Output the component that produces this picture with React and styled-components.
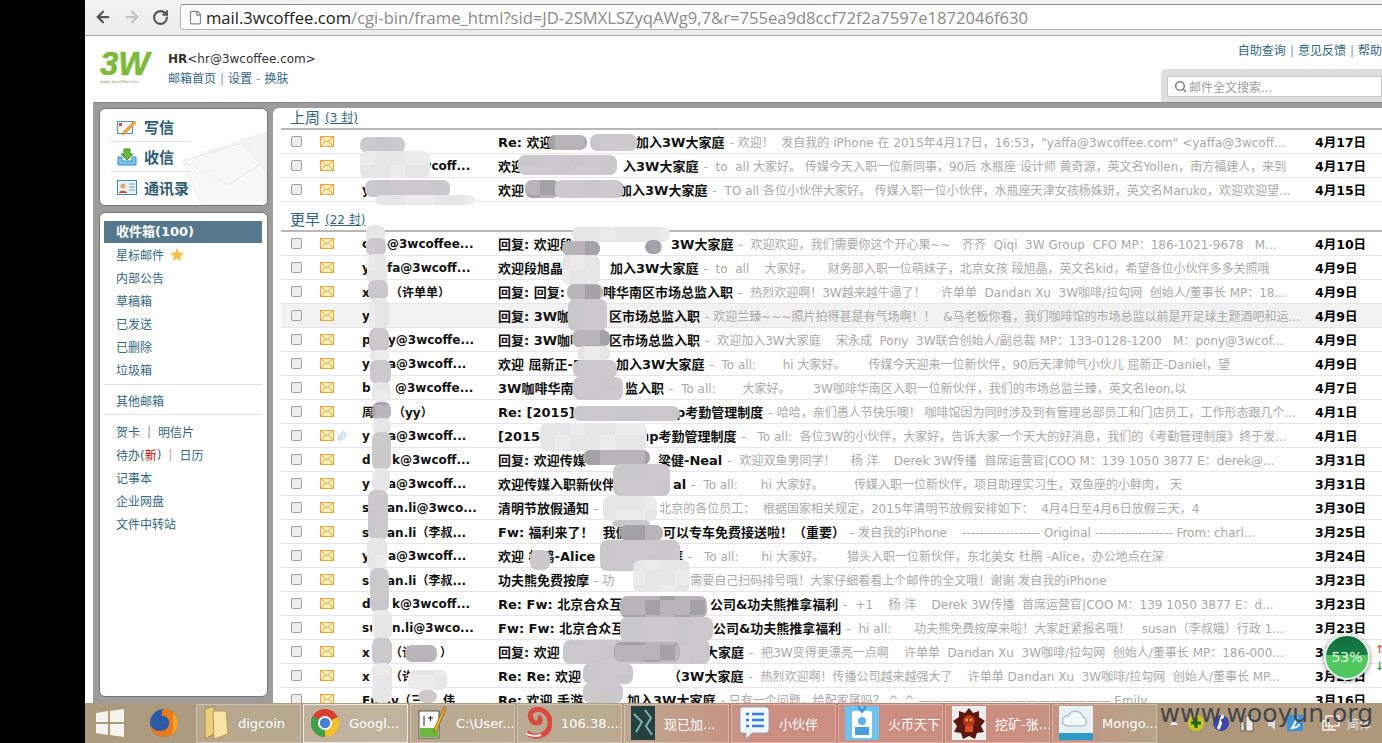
import React from 'react';
import styled, { createGlobalStyle } from 'styled-components';
import { ArrowLeft, ArrowRight, RotateCw, File, Search, Paperclip } from 'lucide-react';

const GlobalStyle = createGlobalStyle`
    html, body { margin: 0; padding: 0; background: #000; }
    * { box-sizing: border-box; }
`;

const FONT = `"DejaVu Sans", "Noto Sans CJK SC", sans-serif`;

// a number after a text is where the next text starts, the stretch between is hidden under the mosaic
const weekMails = [
    { sender: ['', 50], subject: ['Re: 欢迎', 138, '加入3W大家庭'], preview: ['欢迎！  发自我的 iPhone 在 2015年4月17日，16:53，"yaffa@3wcoffee.com" <yaffa@3wcoff...'], date: '4月17日' },
    { sender: ['', 50, '3wcoff...'], subject: ['欢迎', 125, '入3W大家庭'], preview: [' to  all 大家好。 传媒今天入职一位新同事，90后 水瓶座 设计师 黄奇源，英文名Yollen，南方福建人，来到'], date: '4月17日' },
    { sender: ['y'], subject: ['欢迎', 121, '加入3W大家庭'], preview: [' TO all 各位小伙伴大家好。 传媒入职一位小伙伴，水瓶座天津女孩杨姝妍，英文名Maruko，欢迎欢迎望...'], date: '4月15日' },
];

const olderMails = [
    { sender: ['c', 25, '@3wcoffee...'], subject: ['回复: 欢迎段', 173, '3W大家庭'], preview: [' 欢迎欢迎，我们需要你这个开心果~~   齐齐  Qiqi  3W Group  CFO MP：186-1021-9678   M...'], date: '4月10日' },
    { sender: ['y', 25, 'fa@3wcoff...'], subject: ['欢迎段旭晶', 112, '加入3W大家庭'], preview: [' to  all    大家好。    财务部入职一位萌妹子，北京女孩 段旭晶，英文名kid，希望各位小伙伴多多关照哦'], date: '4月9日' },
    { sender: ['x', 28, '（许单单）'], subject: ['回复: 回复:', 105, '啡华南区市场总监入职'], preview: [' 热烈欢迎啊！3W越来越牛逼了！    许单单  Dandan Xu  3W咖啡/拉勾网  创始人/董事长 MP：18...'], date: '4月9日' },
    { sender: ['y'], subject: ['回复: 3W咖', 111, '区市场总监入职'], preview: ['欢迎兰臻~~~照片拍得甚是有气场啊！！  &马老板你看，我们咖啡馆的市场总监以前是开足球主题酒吧和运...'], date: '4月9日', active: true },
    { sender: ['p', 26, 'y@3wcoffe...'], subject: ['回复: 3W咖啡', 111, '区市场总监入职'], preview: [' 欢迎加入3W大家庭    宋永成  Pony  3W联合创始人/副总裁 MP：133-0128-1200   M：pony@3wcof...'], date: '4月9日' },
    { sender: ['y', 26, 'a@3wcoff...'], subject: ['欢迎 屈新正-D', 118, '加入3W大家庭'], preview: [' To all:       hi 大家好。      传媒今天迎来一位新伙伴，90后天津帅气小伙儿 屈新正-Daniel，望'], date: '4月9日' },
    { sender: ['b', 33, '@3wcoffe...'], subject: ['3W咖啡华南', 127, '监入职'], preview: [' To all:       大家好。      3W咖啡华南区入职一位新伙伴，我们的市场总监兰臻，英文名leon,以'], date: '4月7日' },
    { sender: ['周', 31, '（yy）'], subject: ['Re: [2015]', 178, 'p考勤管理制度'], preview: ['哈哈，亲们愚人节快乐噢！ 咖啡馆因为同时涉及到有管理总部员工和门店员工，工作形态跟几个...'], date: '4月1日' },
    { sender: ['y', 26, 'a@3wcoff...'], subject: ['[2015', 142, 'up考勤管理制度'], preview: ['  To all:  各位3W的小伙伴，大家好，告诉大家一个天大的好消息，我们的《考勤管理制度》终于发...'], date: '4月1日', attach: true },
    { sender: ['d', 30, 'k@3wcoff...'], subject: ['回复: 欢迎传媒', 160, '梁健-Neal'], preview: [' 欢迎双鱼男同学！    杨 洋    Derek 3W传播  首席运营官|COO M：139 1050 3877 E：derek@...'], date: '3月31日' },
    { sender: ['y', 26, 'a@3wcoff...'], subject: ['欢迎传媒入职新伙伴', 175, 'al'], preview: [' To all:      hi 大家好。        传媒入职一位新伙伴，项目助理实习生，双鱼座的小鲜肉， 天'], date: '3月31日' },
    { sender: ['s', 25, 'an.li@3wco...'], subject: ['清明节放假通知'], preview: ['', 57, '北京的各位员工：  根据国家相关规定，2015年清明节放假安排如下：  4月4日至4月6日放假三天，4'], date: '3月30日' },
    { sender: ['s', 25, 'an.li（李叔...'], subject: ['Fw: 福利来了！  我们', 165, '可以专车免费接送啦！（重要）'], preview: ['发自我的iPhone    ------------------ Original ------------------ From: charl...'], date: '3月25日' },
    { sender: ['y', 26, 'a@3wcoff...'], subject: ['欢迎 杜鹃-Alice 加', 172, '庭'], preview: ['  To all:      hi 大家好。      猎头入职一位新伙伴，东北美女 杜鹃 -Alice，办公地点在深'], date: '3月24日' },
    { sender: ['s', 25, 'an.li（李叔...'], subject: ['功夫熊免费按摩'], preview: ['功', 88, '需要自己扫码排号哦！大家仔细看看上个邮件的全文哦！谢谢 发自我的iPhone'], date: '3月23日' },
    { sender: ['d', 30, 'k@3wcoff...'], subject: ['Re: Fw: 北京合众互', 212, '公司&功夫熊推拿福利'], preview: [' +1    杨 洋    Derek 3W传播  首席运营官|COO M：139 1050 3877 E：d...'], date: '3月23日' },
    { sender: ['su', 30, 'n.li@3wco...'], subject: ['Fw: Fw: 北京合众互', 215, '公司&功夫熊推拿福利'], preview: [' hi all:      功夫熊免费按摩来啦！大家赶紧报名哦！   susan（李叔娥）行政 1...'], date: '3月23日' },
    { sender: ['x', 28, '（许', 50, '）'], subject: ['回复: 欢迎', 207, '大家庭'], preview: [' 把3W变得更漂亮一点啊    许单单  Dandan Xu  3W咖啡/拉勾网  创始人/董事长 MP：186-000...'], date: '3月23日' },
    { sender: ['x', 28, '（许'], subject: ['Re: Re: 欢迎', 170, '（3W大家庭'], preview: [' 热烈欢迎啊！传播公司越来越强大了    许单单 Dandan Xu  3W咖啡/拉勾网  创始人/董事长 MP...'], date: '3月23日' },
    { sender: ['Emily（三', 81, '伟'], subject: ['Re: 欢迎 手游', 129, '加入3W大家庭'], preview: ['只有一个问题，给配家属吗？ ^_^ ———————————————— Emily ...'], date: '3月16日' },
];

const mailFolders = ['内部公告', '草稿箱', '已发送', '已删除', '垃圾箱'];

const taskItems = [
    { label: 'digcoin', icon: 'folder' },
    { label: 'Googl...', icon: 'chrome', open: true },
    { label: 'C:\\User...', icon: 'notepad' },
    { label: '106.38....', icon: 'spiral' },
    { label: '现已加...', icon: 'game' },
    { label: '小伙伴', icon: 'chat' },
    { label: '火币天下', icon: 'badge' },
    { label: '挖矿-张...', icon: 'monster' },
    { label: 'Mongo...', icon: 'cloud' },
];

function Pieces({ parts }) {
    return parts.map((part, i) => {
        if (typeof part === 'number') return null;
        const next = parts[i + 1];
        return typeof next === 'number' ? <Lead key={i} $w={next}>{part}</Lead> : <span key={i}>{part}</span>;
    });
}

function Envelope() {
    return (
        <svg width="14" height="11" viewBox="0 0 14 11">
            <rect x="0.5" y="0.5" width="13" height="10" fill="#fff0c0" stroke="#e8a73c" />
            <path d="M1 1l6 5 6-5M1 10l4.5-5M13 10L8.5 5" fill="none" stroke="#e8a73c" />
        </svg>
    );
}

function MailRow({ mail }) {
    return (
        <Row $active={mail.active}>
            <CheckCell><Check /></CheckCell>
            <FlagCell>
                <Envelope />
                {mail.attach && <Paperclip size={10} color="#9db4d0" />}
            </FlagCell>
            <Sender><Pieces parts={mail.sender} /></Sender>
            <Content>
                <Subject><Pieces parts={mail.subject} /></Subject>
                <Preview><Dash>-</Dash><Pieces parts={mail.preview} /></Preview>
            </Content>
            <MailDate>{mail.date}</MailDate>
        </Row>
    );
}

function TaskIcon({ name }) {
    if (name === 'folder') return (
        <svg width="26" height="34" viewBox="0 0 26 34">
            <path d="M2 3l9-3v28l-9 5z" fill="#e8cf80" stroke="#a88b45" />
            <path d="M10 5h13l2 23-14 5z" fill="#f6e6a6" stroke="#b89c55" />
        </svg>
    );
    if (name === 'chrome') return (
        <svg width="30" height="30" viewBox="0 0 30 30">
            <circle cx="15" cy="15" r="14" fill="#d8402f" />
            <path d="M15 15L3 22A14 14 0 0 0 15 29z" fill="#3ca24a" />
            <path d="M15 15L15 29A14 14 0 0 0 28 9z" fill="#f2c12c" />
            <path d="M15 15L3 22A14 14 0 0 1 3 8z" fill="#3ca24a" />
            <circle cx="15" cy="15" r="7" fill="#fff" />
            <circle cx="15" cy="15" r="5.2" fill="#4a7fd6" />
        </svg>
    );
    if (name === 'notepad') return (
        <svg width="30" height="34" viewBox="0 0 30 34">
            <rect x="2" y="5" width="20" height="27" fill="#fff" stroke="#555" />
            <rect x="3" y="22" width="18" height="9" fill="#6cb83c" />
            <path d="M7 10v10M11 12h5M13.5 10v5" stroke="#222" fill="none" />
            <path d="M27 1l2 1-9 22-3 3 0-4z" fill="#f0b428" stroke="#6a4a10" strokeWidth="0.6" />
        </svg>
    );
    if (name === 'spiral') return (
        <svg width="28" height="32" viewBox="0 0 28 32">
            <path d="M3 26C10 32 26 30 26 15 26 6 16 0 10 3 4 6 6 16 13 16c4 0 4-5 1-6" fill="none" stroke="#d94a42" strokeWidth="5" />
            <path d="M2 27c6 2 10 3 15 1" fill="none" stroke="#eee" strokeWidth="2" />
        </svg>
    );
    if (name === 'game') return (
        <svg width="24" height="34" viewBox="0 0 24 34">
            <rect width="24" height="34" fill="#26403f" />
            <path d="M3 8l8 8-6 10M14 4l6 8-5 8 6 9" fill="none" stroke="#7fb4b0" strokeWidth="2" />
        </svg>
    );
    if (name === 'chat') return (
        <svg width="32" height="34" viewBox="0 0 32 34">
            <path d="M5 1h23a3 3 0 0 1 3 3v20a3 3 0 0 1-3 3H14l-6 6v-6H5a3 3 0 0 1-3-3V4a3 3 0 0 1 3-3z" fill="#f3f6fb" stroke="#9aa7b8" />
            <path d="M8 8h3M14 8h12M8 14h3M14 14h12M8 20h3M14 20h12" stroke="#2f80e4" strokeWidth="2.4" fill="none" />
        </svg>
    );
    if (name === 'badge') return (
        <svg width="34" height="34" viewBox="0 0 34 34">
            <rect width="34" height="34" fill="#6fc3ec" />
            <rect x="7" y="5" width="20" height="27" rx="2" fill="#fff" />
            <circle cx="17" cy="15" r="4" fill="#5fb3e6" />
            <rect x="10" y="21" width="14" height="8" fill="#4a9fdc" />
            <path d="M13 0l4 6 4-6" fill="none" stroke="#3b8fd0" strokeWidth="2" />
        </svg>
    );
    if (name === 'monster') return (
        <svg width="34" height="34" viewBox="0 0 34 34">
            <rect width="34" height="34" fill="#eee" />
            <path d="M17 2l4 5 6-2 0 6 6 4-4 5 3 6-7 1-2 6-6-3-6 3-2-6-7-1 3-6-4-5 6-4 0-6 6 2z" fill="#5c1710" />
            <circle cx="17" cy="15" r="6" fill="#b8361c" />
            <circle cx="15" cy="14" r="1.2" fill="#f4c430" />
            <circle cx="19" cy="14" r="1.2" fill="#f4c430" />
            <rect x="13" y="20" width="8" height="6" fill="#d8502a" />
        </svg>
    );
    return (
        <svg width="34" height="34" viewBox="0 0 34 34">
            <rect width="34" height="34" fill="#e8f0f4" />
            <path d="M8 20a5 5 0 0 1 1-10 8 8 0 0 1 15 1 5 5 0 0 1 1 9z" fill="#f5f8fa" stroke="#a8c4d4" strokeWidth="1.4" />
            <rect y="27" width="34" height="7" fill="#2f9cc8" />
        </svg>
    );
}

function WindowsLogo() {
    return (
        <svg width="28" height="28" viewBox="0 0 28 28">
            <path d="M0 4l12-2v11H0zM14 2l14-2v13H14zM0 15h12v11L0 24zM14 15h14v13l-14-2z" fill="#f6f4ee" />
        </svg>
    );
}

function Firefox() {
    return (
        <svg width="30" height="30" viewBox="0 0 30 30">
            <circle cx="15" cy="15" r="14" fill="#2b5aa8" />
            <path d="M15 1a14 14 0 0 1 14 14 14 14 0 0 1-14 14C8 29 2 24 1 17c2 3 5 6 10 6 6 0 10-4 9-10-1-4-5-6-8-5 2-3 0-6 3-7z" fill="#ea7a1c" />
            <path d="M24 4c3 3 5 7 5 11 0 6-4 11-9 13 4-3 5-8 4-13z" fill="#f4a42a" />
        </svg>
    );
}

function TrayIcons() {
    return (
        <svg width="148" height="20" viewBox="0 0 148 20">
            <path d="M3 12h8l-4-5z" fill="#eee" />
            <circle cx="29" cy="10" r="8" fill="#c7c71f" />
            <path d="M29 5v10M24 10h10" stroke="#136b1f" strokeWidth="3" />
            <circle cx="54" cy="10" r="8" fill="#3848b0" />
            <path d="M56 2c-3 6-2 10-5 14" stroke="#fff" strokeWidth="3" fill="none" />
            <path d="M74 9h3v9h-3zM79 3h7v15h-7zM75 3v5M82 1v2" fill="#eee" stroke="#333" strokeWidth="0.6" />
            <path d="M101 8h3l4-4v13l-4-4h-3z" fill="#ddd" />
            <rect x="120" y="2" width="16" height="16" fill="#3c94d8" />
            <path d="M130 4c-1 6-3 8-5 11 4 0 7-2 7-4" stroke="#fff" strokeWidth="2" fill="none" />
        </svg>
    );
}

function NetworkIcon() {
    return (
        <svg width="18" height="18" viewBox="0 0 18 18">
            <rect x="4" y="2" width="13" height="10" fill="none" stroke="#f2f2f2" strokeWidth="1.4" />
            <path d="M1 7h6v9H1zM10 12v4M7 16h7" fill="none" stroke="#f2f2f2" strokeWidth="1.4" />
        </svg>
    );
}

const mosaic = {
    light: ['#ececed', '#dcdcde', '#f4f4f4', '#d4d4d6', '#e6e6e6', '#d9d9db'],
    mid: ['#c8c8cb', '#b4b3b6', '#d4d4d4', '#aaaaae', '#cbc9cb', '#bcbabc'],
    dark: ['#a3a3a5', '#8f8f91', '#b0aeb0', '#9a999b', '#b7b5b7', '#88888a'],
};

// tone, x from, x to, y from, y to
const blobs = [
    ['mid', 360, 405, 137, 153],
    ['light', 360, 430, 151, 178],
    ['mid', 365, 450, 180, 197],
    ['light', 375, 475, 195, 205],
    ['light', 366, 385, 225, 250],
    ['mid', 366, 386, 238, 256],
    ['light', 367, 387, 254, 285],
    ['mid', 368, 388, 280, 300],
    ['light', 369, 389, 298, 330],
    ['mid', 369, 389, 328, 352],
    ['light', 370, 390, 350, 362],
    ['mid', 370, 391, 360, 384],
    ['light', 372, 391, 382, 402],
    ['dark', 372, 391, 402, 420],
    ['light', 372, 391, 418, 434],
    ['mid', 372, 391, 432, 470],
    ['light', 372, 390, 468, 492],
    ['mid', 368, 388, 490, 540],
    ['light', 367, 387, 538, 570],
    ['mid', 370, 389, 568, 612],
    ['light', 372, 392, 610, 640],
    ['mid', 372, 392, 638, 665],
    ['light', 372, 392, 663, 703],
    ['dark', 548, 587, 135, 150],
    ['mid', 590, 637, 134, 151],
    ['mid', 518, 617, 155, 175],
    ['dark', 525, 560, 180, 198],
    ['mid', 555, 623, 180, 198],
    ['light', 572, 670, 227, 242],
    ['dark', 562, 600, 241, 256],
    ['dark', 645, 662, 240, 254],
    ['light', 562, 600, 255, 285],
    ['dark', 567, 603, 284, 300],
    ['mid', 568, 607, 299, 331],
    ['dark', 572, 610, 330, 347],
    ['light', 577, 610, 346, 361],
    ['mid', 573, 617, 360, 378],
    ['mid', 573, 623, 377, 400],
    ['mid', 573, 680, 406, 421],
    ['light', 540, 647, 423, 451],
    ['dark', 583, 650, 450, 465],
    ['mid', 613, 670, 464, 496],
    ['light', 603, 657, 496, 521],
    ['mid', 612, 650, 520, 527],
    ['dark', 620, 663, 525, 541],
    ['mid', 600, 680, 540, 571],
    ['light', 633, 690, 560, 592],
    ['dark', 620, 707, 596, 618],
    ['mid', 620, 713, 617, 641],
    ['mid', 563, 710, 640, 664],
    ['dark', 614, 680, 642, 662],
    ['mid', 583, 633, 663, 684],
    ['mid', 583, 623, 683, 703],
    ['mid', 530, 550, 550, 570],
    ['dark', 405, 437, 645, 662],
    ['light', 408, 447, 670, 690],
    ['mid', 418, 437, 690, 703],
];

function Mosaic() {
    return (
        <MosaicLayer width="1382" height="743" viewBox="0 0 1382 743">
            <defs>
                {Object.keys(mosaic).map(tone => (
                    <pattern key={tone} id={tone} width="105" height="105" patternUnits="userSpaceOnUse">
                        {Array.from({ length: 49 }).map((_, i) => (
                            <rect key={i} x={(i % 7) * 15} y={Math.floor(i / 7) * 15} width="15" height="15"
                                fill={mosaic[tone][(i * i + 3 * i) % 6]} />
                        ))}
                    </pattern>
                ))}
            </defs>
            {blobs.map(([tone, x0, x1, y0, y1], i) => (
                <rect key={i} x={x0} y={y0} width={x1 - x0} height={y1 - y0} rx="7" fill={`url(#${tone})`} />
            ))}
        </MosaicLayer>
    );
}

function App() {
    return (
        <Screen>
            <GlobalStyle />
            <Strip />
            <Browser>
                <Toolbar>
                    <NavButtons>
                        <ArrowLeft size={18} strokeWidth={3} color="#555" />
                        <ArrowRight size={18} strokeWidth={3} color="#c4c4c4" />
                        <RotateCw size={17} strokeWidth={3} color="#555" />
                    </NavButtons>
                    <UrlBox>
                        <File size={15} color="#888" />
                        <UrlHost>mail.3wcoffee.com</UrlHost>
                        <UrlPath>/cgi-bin/frame_html?sid=JD-2SMXLSZyqAWg9,7&amp;r=755ea9d8ccf72f2a7597e1872046f630</UrlPath>
                    </UrlBox>
                </Toolbar>

                <Header>
                    <Logo>
                        <LogoMark>3W</LogoMark>
                        <LogoSite>www.3wcoffee.com</LogoSite>
                    </Logo>
                    <Account>
                        <div><b>HR</b>&lt;hr@3wcoffee.com&gt;</div>
                        <AccountLinks>邮箱首页<Sep>|</Sep>设置<Sep>-</Sep>换肤</AccountLinks>
                    </Account>
                    <HeaderRight>
                        <HelpLinks>自助查询<Sep>|</Sep>意见反馈<Sep>|</Sep>帮助</HelpLinks>
                        <SearchTab>
                            <SearchBox>
                                <Search size={13} strokeWidth={3} color="#888" />
                                邮件全文搜索...
                            </SearchBox>
                        </SearchTab>
                    </HeaderRight>
                </Header>

                <Frame>
                    <Sidebar>
                        <ComposePanel>
                            <LetterArt width="84" height="76" viewBox="0 0 84 76">
                                <path d="M16 24L84 2v74H30z" fill="#f4f4f4" />
                                <path d="M0 32L60 14l24 30v32H18z" fill="#f8f8f8" stroke="#ececec" />
                                <path d="M0 32l46 24 30-20" fill="none" stroke="#e8e8e8" />
                            </LetterArt>
                            <ComposeRow>
                                <svg width="20" height="16" viewBox="0 0 20 16">
                                    <rect x="0.5" y="2.5" width="15" height="12" fill="#fff" stroke="#4a90c8" />
                                    <rect x="2" y="4" width="3" height="3" fill="#d8442c" />
                                    <path d="M6 13l11-11 2 2L8 15l-3 1z" fill="#f2a53a" stroke="#b8742a" strokeWidth="0.5" />
                                </svg>
                                写信
                            </ComposeRow>
                            <ComposeRow>
                                <svg width="20" height="18" viewBox="0 0 20 18">
                                    <path d="M1 9v8h18V9h-4v4H5V9z" fill="#7cc4ea" stroke="#3a8cc0" />
                                    <path d="M7 1h6v5h3l-6 6-6-6h3z" fill="#66bb44" stroke="#3f8f2a" />
                                </svg>
                                收信
                            </ComposeRow>
                            <ComposeRow $last>
                                <svg width="20" height="15" viewBox="0 0 20 15">
                                    <rect x="0.5" y="0.5" width="19" height="14" fill="#eaf3fb" stroke="#3a8cc0" />
                                    <circle cx="6" cy="6" r="2.6" fill="#e8a878" />
                                    <path d="M2 13c0-3 8-3 8 0z" fill="#d8442c" />
                                    <path d="M12 4h6M12 7h6M12 10h6" stroke="#6aa0c8" />
                                </svg>
                                通讯录
                            </ComposeRow>
                        </ComposePanel>

                        <FolderPanel>
                            <Inbox>收件箱(100)</Inbox>
                            <Folder>
                                星标邮件
                                <svg width="14" height="13" viewBox="0 0 14 13">
                                    <path d="M7 0l2 4.500 5 .5-3.700 3.300L11.300 13 7 10.500 2.700 13l1-4.700L0 5l5-.5z" fill="#f4c24a" />
                                </svg>
                            </Folder>
                            {mailFolders.map(name => <Folder key={name}>{name}</Folder>)}
                            <FolderRule />
                            <Folder $short>其他邮箱</Folder>
                            <FolderRule />
                            <Folder>贺卡<WideSep>|</WideSep>明信片</Folder>
                            <Folder>待办(<New>新</New>)<WideSep $red>|</WideSep>日历</Folder>
                            <Folder>记事本</Folder>
                            <Folder>企业网盘</Folder>
                            <Folder>文件中转站</Folder>
                        </FolderPanel>
                    </Sidebar>

                    <Main>
                        <SectionHead>上周<SectionCount>(3 封)</SectionCount></SectionHead>
                        {weekMails.map((mail, i) => <MailRow key={i} mail={mail} />)}
                        <SectionHead $later>更早<SectionCount>(22 封)</SectionCount></SectionHead>
                        {olderMails.map((mail, i) => <MailRow key={i} mail={mail} />)}
                    </Main>
                </Frame>

                <Taskbar>
                    <StartButton><WindowsLogo /></StartButton>
                    <PinnedIcon><Firefox /></PinnedIcon>
                    {taskItems.map(item => (
                        <TaskItem key={item.label} $open={item.open}>
                            <TaskIcon name={item.icon} />
                            <span>{item.label}</span>
                        </TaskItem>
                    ))}
                    <Tray>
                        <TrayIcons />
                        <NetworkIcon />
                        <TrayLang>简体</TrayLang>
                    </Tray>
                </Taskbar>
            </Browser>

            <Mosaic />

            <SpeedBall>
                <BallText>53%</BallText>
                <BallArrows>
                    <span>↑</span>
                    <GreenArrow>↓</GreenArrow>
                </BallArrows>
            </SpeedBall>
            <Watermark>www.wooyun.org</Watermark>
        </Screen>
    );
}

export default App;

const Screen = styled.div`
    position: relative;
    width: 1382px;
    height: 743px;
    display: flex;
    overflow: hidden;
    background: #000;
    font-family: ${FONT};
    font-size: 12px;
`;

const Strip = styled.div`
    width: 85px;
    background: #000;
`;

const Browser = styled.div`
    flex: 1;
    min-width: 0;
    display: flex;
    flex-direction: column;
    background: #fff;
`;

const Toolbar = styled.div`
    height: 36px;
    display: flex;
    padding: 4px 0 5px 9px;
    background: linear-gradient(#f3f3f3, #ececec);
    border-bottom: 1px solid #a8a8a8;
`;

const NavButtons = styled.div`
    width: 86px;
    display: flex;
    align-items: center;
    gap: 11px;
`;

const UrlBox = styled.div`
    flex: 1;
    display: flex;
    align-items: center;
    padding-left: 7px;
    background: #fff;
    border: 1px solid #b4b4b4;
    border-top-color: #8a8a8a;
    border-right: 0;
    border-radius: 3px 0 0 3px;
    font-family: "Open Sans", sans-serif;
    font-size: 16.600px;
    white-space: nowrap;
    overflow: hidden;
`;

const UrlHost = styled.span`
    margin-left: 3px;
    color: #222;
`;

const UrlPath = styled.span`
    color: #8a8a8a;
`;

const Header = styled.div`
    height: 66px;
    display: flex;
    background: #fff;
`;

const Logo = styled.div`
    width: 83px;
    padding: 14px 0 0 15px;
    display: flex;
    flex-direction: column;
    color: #7fb93c;
`;

const LogoMark = styled.div`
    font-family: "Liberation Sans", sans-serif;
    font-size: 33px;
    font-weight: bold;
    font-style: italic;
    line-height: 27px;
    -webkit-text-stroke: 0.6px #7fb93c;
`;

const LogoSite = styled.div`
    margin-top: 2px;
    font-size: 4px;
    line-height: 5px;
    color: #8aa070;
`;

const Account = styled.div`
    padding-top: 13px;
    color: #333;
    line-height: 20px;
`;

const AccountLinks = styled.div`
    color: #33667f;
`;

const Sep = styled.span`
    margin: 0 4px;
    color: #7fa0b4;
`;

const WideSep = styled.span`
    margin: 0 7px;
    color: ${props => (props.$red ? '#c98' : '#7fa0b4')};
`;

const HeaderRight = styled.div`
    margin-left: auto;
    display: flex;
    flex-direction: column;
    align-items: flex-end;
`;

const HelpLinks = styled.div`
    padding-top: 7px;
    color: #33667f;
    line-height: 16px;
`;

const SearchTab = styled.div`
    margin-top: auto;
    width: 221px;
    height: 33px;
    padding: 7px 0 5px 6px;
    background: #dedede;
    border-radius: 5px 0 0 0;
`;

const SearchBox = styled.div`
    height: 21px;
    display: flex;
    align-items: center;
    gap: 2px;
    padding-left: 6px;
    background: #fff;
    border: 1px solid #c8c8c8;
    color: #a0a0a0;
`;

const Frame = styled.div`
    flex: 1;
    min-height: 0;
    margin-left: 8px;
    padding: 5px 0 0 6px;
    display: flex;
    gap: 5px;
    background: #9c9c9c;
    border-top: 1px solid #8a8a8a;
`;

const Sidebar = styled.div`
    width: 169px;
    display: flex;
    flex-direction: column;
    gap: 6px;
    padding-bottom: 6px;
`;

const ComposePanel = styled.div`
    position: relative;
    height: 98px;
    padding: 3px 0 0 10px;
    background: #fff;
    border: 1px solid #777;
    border-radius: 6px;
    overflow: hidden;
`;

const LetterArt = styled.svg`
    position: absolute;
    right: 0;
    bottom: 0;
`;

const ComposeRow = styled.div`
    position: relative;
    width: 81px;
    height: 30px;
    display: flex;
    align-items: center;
    gap: 7px;
    padding-left: 7px;
    border-bottom: ${props => (props.$last ? 'none' : '1px solid #e2e2e2')};
    color: #2f5d74;
    font-size: 15px;
    font-weight: bold;
    white-space: nowrap;
`;

const FolderPanel = styled.div`
    flex: 1;
    padding: 8px 5px 7px 4px;
    background: #fff;
    border: 1px solid #777;
    border-radius: 6px;
`;

const Inbox = styled.div`
    height: 22px;
    padding-left: 12px;
    line-height: 22px;
    background: #55788e;
    color: #fff;
    font-weight: bold;
    font-size: 13px;
`;

const Folder = styled.div`
    height: ${props => (props.$short ? '21px' : '23px')};
    display: flex;
    align-items: center;
    padding-left: 12px;
    color: #33667f;
    svg {
        margin-left: 6px;
    }
`;

const New = styled.span`
    color: #c00;
`;

const FolderRule = styled.div`
    height: 1px;
    margin: 3px 0 5px;
    background: #dce0e6;
`;

const Main = styled.div`
    flex: 1;
    min-width: 0;
    padding-left: 8px;
    background: #fff;
    border-radius: 6px 0 0 0;
    overflow: hidden;
`;

const SectionHead = styled.div`
    height: 22px;
    margin-top: ${props => (props.$later ? '8px' : '0')};
    padding: 0 0 3px 9px;
    display: flex;
    align-items: center;
    border-bottom: 2px solid #b8b8b8;
    color: #33667f;
    font-size: 15px;
`;

const SectionCount = styled.span`
    margin-left: 5px;
    font-size: 12px;
    text-decoration: underline;
`;

const Row = styled.div`
    height: 24px;
    display: flex;
    align-items: center;
    background: ${props => (props.$active ? '#f2f2f2' : '#fff')};
    border-bottom: 1px solid #e6e6e6;
    white-space: pre;
`;

const CheckCell = styled.div`
    width: 39px;
    padding-left: 10px;
`;

const Check = styled.div`
    width: 11px;
    height: 11px;
    background: #eee;
    border: 1px solid #a0a0a0;
    border-radius: 2px;
`;

const FlagCell = styled.div`
    width: 42px;
    display: flex;
    align-items: center;
    gap: 3px;
`;

const Sender = styled.div`
    width: 136px;
    color: #111;
    font-weight: bold;
    overflow: hidden;
`;

const Lead = styled.span`
    display: inline-block;
    width: ${props => props.$w}px;
`;

const Content = styled.div`
    width: 817px;
    overflow: hidden;
`;

const Subject = styled.span`
    color: #111;
    font-size: 13px;
    font-weight: bold;
`;

const Preview = styled.span`
    color: #a9a9a9;
`;

const Dash = styled.span`
    margin: 0 4px 0 5px;
`;

const MailDate = styled.div`
    color: #000;
    font-size: 12.500px;
    font-weight: bold;
    white-space: nowrap;
`;

const Taskbar = styled.div`
    position: relative;
    z-index: 2;
    height: 40px;
    display: flex;
    align-items: center;
    gap: 2px;
    flex-shrink: 0;
    padding-left: 11px;
    background: linear-gradient(90deg, #ac9a7e 0, #b2a084 40%, #c47f70 52%, #c47f70 72%, #ae977a 82%);
`;

const StartButton = styled.div`
    width: 51px;
    display: flex;
`;

const PinnedIcon = styled.div`
    width: 45px;
    display: flex;
`;

const TaskItem = styled.div`
    width: 105px;
    height: 39px;
    display: flex;
    align-items: center;
    gap: 9px;
    padding-left: 6px;
    color: #fff;
    font-size: 13px;
    white-space: nowrap;
    overflow: hidden;
    background: rgba(255, 255, 255, ${props => (props.$open ? 0.22 : 0.12)});
    border: 1px solid rgba(255, 255, 255, ${props => (props.$open ? 0.7 : 0.3)});
    svg {
        flex-shrink: 0;
    }
`;

const Tray = styled.div`
    flex: 1;
    display: flex;
    align-items: center;
    padding-left: 8px;
    gap: 7px;
`;

const TrayLang = styled.span`
    color: #e8e8e8;
    white-space: nowrap;
`;

const Watermark = styled.div`
    position: absolute;
    z-index: 3;
    right: 9px;
    top: 698px;
    color: #44464c;
    font-family: "DejaVu Sans", sans-serif;
    font-size: 25px;
    line-height: 32px;
    pointer-events: none;
`;

const MosaicLayer = styled.svg`
    position: absolute;
    left: 0;
    top: 0;
    z-index: 1;
    pointer-events: none;
`;

const SpeedBall = styled.div`
    position: absolute;
    z-index: 3;
    left: 1324px;
    top: 634px;
    width: 46px;
    height: 46px;
    display: flex;
    align-items: center;
    justify-content: center;
    border: 2px solid #e8efe8;
    border-radius: 50%;
    background: linear-gradient(#0f6f3e 0, #1a7d48 46%, #4fc860 46%, #4fc860 100%);
    box-shadow: 0 1px 5px rgba(0, 0, 0, 0.5);
`;

const BallText = styled.span`
    color: #e8f6ea;
    font-size: 14px;
`;

const BallArrows = styled.div`
    position: absolute;
    left: 49px;
    top: 5px;
    display: flex;
    flex-direction: column;
    color: #e0604a;
    font-size: 11px;
    line-height: 17px;
    font-weight: bold;
`;

const GreenArrow = styled.span`
    color: #3aa050;
`;
